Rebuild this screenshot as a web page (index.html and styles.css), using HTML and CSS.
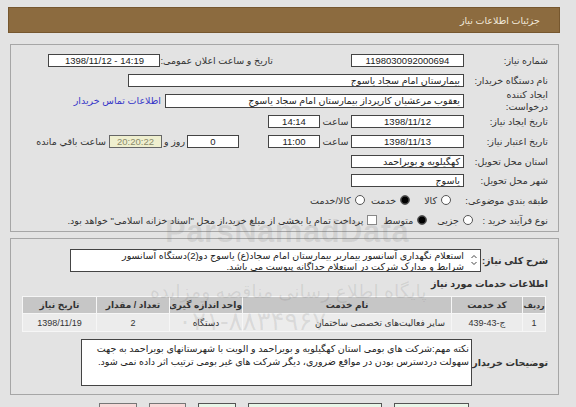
FILE: index.html
```html
<!DOCTYPE html>
<html lang="fa" dir="rtl">
<head>
<meta charset="utf-8">
<title>جزئیات اطلاعات نیاز</title>
<link rel="stylesheet" href="styles.css">
</head>
<body>
<div class="page">
  <div class="header"><span>جزئیات اطلاعات نیاز</span></div>

  <div class="panel p1">
    <div class="row">
      <div class="lbl">شماره نیاز:</div>
      <div class="box w113 c">1198030092000694</div>
      <div class="pub">
        <div class="pub-lbl">تاریخ و ساعت اعلان عمومی:</div>
        <div class="box w112 c ltr">1398/11/12 - 14:19</div>
      </div>
    </div>
    <div class="row">
      <div class="lbl">نام دستگاه خریدار:</div>
      <div class="box w336">بیمارستان امام سجاد یاسوج</div>
    </div>
    <div class="row h21">
      <div class="lbl two">ایجاد کننده<br>درخواست:</div>
      <div class="box w299 h14">یعقوب مرعشیان کارپرداز بیمارستان امام سجاد یاسوج</div>
      <a class="link" href="#">اطلاعات تماس خریدار</a>
    </div>
    <div class="row h21">
      <div class="lbl">تاریخ ایجاد نیاز:</div>
      <div class="box w113 c">1398/11/12</div>
      <div class="mini">ساعت</div>
      <div class="box w52 c">14:14</div>
    </div>
    <div class="row h19">
      <div class="lbl">تاریخ اعتبار نیاز:</div>
      <div class="box w113 c">1398/11/13</div>
      <div class="mini">ساعت</div>
      <div class="box w52 c">11:00</div>
      <div class="box w52 c day">0</div>
      <div class="mini2">روز و</div>
      <div class="box w53 c remain">20:20:22</div>
      <div class="rest">ساعت باقي مانده</div>
    </div>
    <div class="row">
      <div class="lbl">استان محل تحویل:</div>
      <div class="box w113">کهگیلویه و بویراحمد</div>
    </div>
    <div class="row h19">
      <div class="lbl">شهر محل تحویل:</div>
      <div class="box w113">یاسوج</div>
    </div>
    <div class="row">
      <div class="lbl cat">طبقه بندی موضوعی:</div>
      <span class="radio"></span><span class="opt o1">کالا</span>
      <span class="radio on"></span><span class="opt o2">خدمت</span>
      <span class="radio"></span><span class="opt">کالا/خدمت</span>
    </div>
    <div class="row">
      <div class="lbl proc">نوع فرآیند خرید :</div>
      <span class="radio"></span><span class="opt o3">جزیی</span>
      <span class="radio on"></span><span class="opt o4">متوسط</span>
      <span class="check"></span><span class="opt">پرداخت تمام یا بخشی از مبلغ خرید،از محل "اسناد خزانه اسلامی" خواهد بود.</span>
    </div>
  </div>

  <div class="panel p2">
    <div class="row-desc">
      <div class="blbl desc-lbl">شرح کلی نیاز:</div>
      <div class="area desc">
        <svg class="spin" width="6" height="12" viewBox="0 0 6 12"><path d="M0.5 4 L3 1.5 L5.5 4" fill="none" stroke="#444" stroke-width="1"/><path d="M0.5 8 L3 10.5 L5.5 8" fill="none" stroke="#444" stroke-width="1"/></svg>
        <div class="desc-text">استعلام نگهداری آسانسور بیماربر بیمارستان امام سجاد(ع) یاسوج دو(2)دستگاه آسانسور<br>شرایط  و مدارک شرکت در استعلام جداگانه پیوست می باشد.</div>
      </div>
    </div>
    <div class="blbl sect">اطلاعات خدمات مورد نیاز</div>
    <table class="grid">
      <colgroup>
        <col class="c1"><col class="c2"><col class="c3"><col class="c4"><col class="c5"><col class="c6">
      </colgroup>
      <thead>
        <tr><th class="th1">ردیف</th><th>کد خدمت</th><th>نام خدمت</th><th>واحد اندازه گیری</th><th>تعداد / مقدار</th><th>تاریخ نیاز</th></tr>
      </thead>
      <tbody>
        <tr><td>1</td><td>ج-43-439</td><td>سایر فعالیت‌های تخصصی ساختمان</td><td>دستگاه</td><td>2</td><td>1398/11/19</td></tr>
      </tbody>
    </table>
    <div class="row-note">
      <div class="blbl note-lbl">توضیحات خریدار:</div>
      <div class="area note">نکته مهم:شرکت های بومی استان کهگیلویه و بویراحمد و الویت با شهرستانهای بویراحمد به جهت<br>سهولت دردسترس بودن در مواقع ضروری، دیگر شرکت های غیر بومی ترتیب اثر داده نمی شود.</div>
    </div>
  </div>

  <div class="buttons">
    <span class="btn g w75"></span>
    <span class="btn g w134"></span>
    <span class="btn g w38"></span>
    <span class="btn p w37"></span>
    <span class="btn p w38"></span>
  </div>
</div>

<div class="wm wm-latin">ParsNamadData</div>
<div class="wm wm-fa">پایگاه اطلاع رسانی مناقصه ومزایده</div>
<div class="wm wm-tel">۰۲۱-۸۸۳۴۹۶۷۰</div>
</body>
</html>
```
FILE: styles.css
```css
html, body {
  margin: 0;
  padding: 0;
}
body {
  width: 576px;
  height: 407px;
  overflow: hidden;
  position: relative;
  background: #e3e3e3;
  direction: rtl;
  font-family: "Liberation Sans", "DejaVu Sans", sans-serif;
  font-size: 9.5px;
  color: #222;
}
.page {
  padding: 7px 16px 0 8px;
}
.header {
  height: 26px;
  box-sizing: border-box;
  background: #8c6b3f;
  border: 1px solid #76572f;
  display: flex;
  align-items: center;
  padding-right: 19px;
  color: #f2eadc;
}
.panel {
  box-sizing: border-box;
  border: 1px solid #a6a6a6;
  margin: 0 1px 0 2px;
}
.p1 {
  margin-top: 11px;
  height: 188px;
  padding: 5px 10px 0 0;
}
.p2 {
  margin-top: 6px;
  height: 157px;
  padding: 10px 0 0 0;
}
.row {
  display: flex;
  align-items: center;
  height: 20px;
  white-space: nowrap;
}
.row.h21 { height: 21px; }
.row.h19 { height: 19px; }
.lbl {
  width: 84px;
  flex: none;
  color: #333;
}
.lbl.two {
  line-height: 12px;
}
.box {
  flex: none;
  box-sizing: border-box;
  height: 13px;
  line-height: 11px;
  background: #fff;
  border: 1px solid #444;
  padding: 0 3px;
  overflow: hidden;
  color: #222;
}
.box.h14 { height: 14px; }
.box.c { text-align: center; }
.box.ltr { direction: ltr; }
.w113 { width: 113px; }
.w112 { width: 112px; }
.w336 { width: 336px; }
.w299 { width: 299px; }
.w52 { width: 52px; }
.w53 { width: 53px; }
.pub {
  width: 224px;
  margin-right: 78px;
  display: flex;
  align-items: center;
  justify-content: space-between;
}
.pub-lbl {
  color: #333;
}
.link {
  margin-right: 4px;
  color: #3737c8;
  text-decoration: none;
}
.mini {
  width: 31px;
  flex: none;
  text-align: center;
  color: #333;
}
.day { margin-right: 29px; }
.mini2 {
  width: 25px;
  flex: none;
  text-align: center;
  color: #333;
}
.remain {
  background: #efefcf;
  color: #8a8a6a;
  border-color: #666;
}
.rest {
  margin-right: 3px;
  color: #333;
}
.cat { width: 97px; }
.proc { width: 75px; }
.radio {
  flex: none;
  width: 10px;
  height: 10px;
  box-sizing: border-box;
  border: 1px solid #555;
  border-radius: 50%;
  background: #fff;
}
.radio.on {
  background: radial-gradient(circle, #000 0 3px, #333 3.5px, #555 100%);
}
.check {
  flex: none;
  width: 10px;
  height: 10px;
  box-sizing: border-box;
  border: 1px solid #888;
  background: #fff;
}
.opt {
  margin-right: 4px;
  color: #333;
}
.o1 { margin-left: 14px; }
.o2 { margin-left: 6px; }
.o3 { margin-left: 10px; }
.o4 { margin-left: 6px; }
.row-desc {
  display: flex;
  align-items: center;
  height: 23px;
}
.blbl {
  font-weight: bold;
  color: #333;
  white-space: nowrap;
}
.desc-lbl {
  width: 67px;
  padding-right: 10px;
  flex: none;
}
.area {
  box-sizing: border-box;
  background: #fff;
  border: 1px solid #444;
  position: relative;
}
.desc {
  width: 411px;
  height: 23px;
  padding: 0 16px 0 4px;
  line-height: 11px;
  white-space: nowrap;
  overflow: hidden;
}
.spin {
  position: absolute;
  right: 3px;
  top: 4px;
}
.sect {
  margin-top: 6px;
  height: 12px;
  line-height: 12px;
  padding-right: 10px;
}
.grid {
  margin: 6px 12px 0 11px;
  width: 524px;
  table-layout: fixed;
  border-collapse: separate;
  border-spacing: 1px;
  background: #f6f6f6;
  font-size: 9px;
}
.grid col.c1 { width: 22px; }
.grid col.c2 { width: 70px; }
.grid col.c3 { width: 208px; }
.grid col.c4 { width: 72px; }
.grid col.c5 { width: 72px; }
.grid col.c6 { width: 73px; }
.grid th {
  background: #c6c6c6;
  color: #333;
  font-weight: bold;
  height: 16px;
  padding: 0;
  text-align: center;
  white-space: nowrap;
  overflow: hidden;
}
.grid th.th1 {
  font-size: 8px;
  letter-spacing: -0.2px;
}
.grid td {
  background: #ececec;
  height: 17px;
  padding: 0;
  text-align: center;
  color: #333;
  white-space: nowrap;
  overflow: hidden;
}
.grid td:nth-child(3) { text-align: right; padding-right: 6px; }
.row-note {
  display: flex;
  align-items: center;
  margin-top: 7px;
  height: 47px;
}
.note-lbl {
  width: 76px;
  padding-right: 10px;
  flex: none;
}
.note {
  width: 391px;
  height: 47px;
  padding: 2px 2px 0 2px;
  line-height: 13px;
  white-space: nowrap;
  overflow: hidden;
}
.buttons {
  display: flex;
  margin-top: 8px;
  padding-right: 91px;
  gap: 12px;
}
.btn {
  display: block;
  height: 20px;
  box-sizing: border-box;
  border: 1px solid #555;
}
.btn.g { background: #e8f6e8; }
.btn.p { background: #f8d8d8; border-color: #777; }
.btn.w75 { width: 75px; }
.btn.w134 { width: 134px; }
.btn.w38 { width: 38px; }
.btn.w37 { width: 37px; }
.wm {
  position: absolute;
  pointer-events: none;
  white-space: nowrap;
  color: rgba(90, 90, 90, 0.13);
}
.wm-latin {
  left: 165px;
  top: 214px;
  font-family: "Liberation Sans", sans-serif;
  font-weight: bold;
  font-size: 31px;
  letter-spacing: 0.5px;
  direction: ltr;
}
.wm-fa {
  left: 150px;
  top: 280px;
  font-size: 19px;
}
.wm-tel {
  left: 178px;
  top: 306px;
  font-size: 26px;
  direction: ltr;
}
```
